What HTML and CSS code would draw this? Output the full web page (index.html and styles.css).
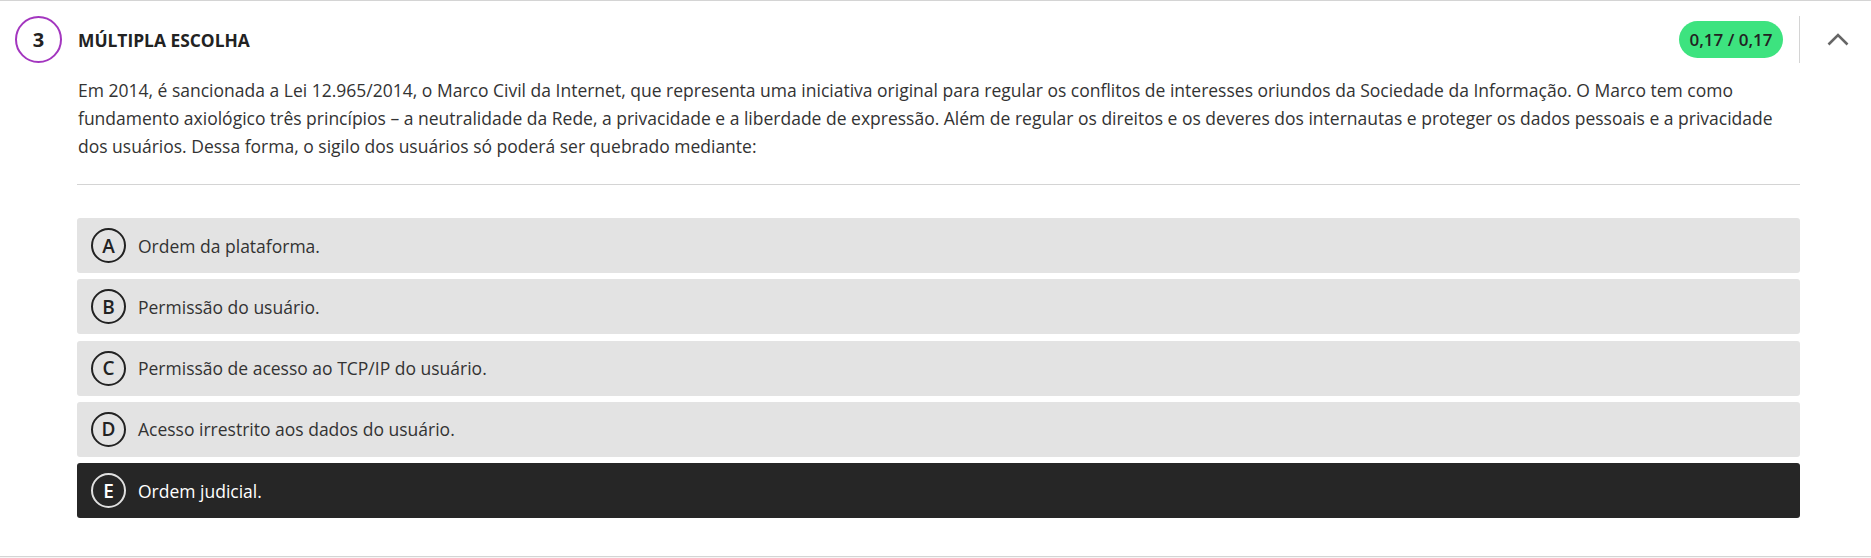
FILE: index.html
```html
<!DOCTYPE html>
<html lang="pt-BR">
<head>
  <meta charset="UTF-8">
  <title>Questão 3</title>
  <link rel="stylesheet" href="styles.css">
</head>
<body>

  <section class="questao">
    <div class="questao-topo">
      <span class="numero">3</span>
      <h2 class="tipo">MÚLTIPLA ESCOLHA</h2>
      <span class="nota">0,17 / 0,17</span>
      <span class="separador"></span>
      <button class="recolher" aria-label="Recolher">
        <svg width="22" height="13" viewBox="0 0 22 13">
          <polyline points="1.5,11.5 11,2 20.5,11.5" fill="none" stroke="#666" stroke-width="2.6"/>
        </svg>
      </button>
    </div>

    <div class="questao-corpo">
      <p class="enunciado">Em 2014, é sancionada a Lei 12.965/2014, o Marco Civil da Internet, que representa uma iniciativa original para regular os conflitos de interesses oriundos da Sociedade da Informação. O Marco tem como fundamento axiológico três princípios – a neutralidade da Rede, a privacidade e a liberdade de expressão. Além de regular os direitos e os deveres dos internautas e proteger os dados pessoais e a privacidade dos usuários. Dessa forma, o sigilo dos usuários só poderá ser quebrado mediante:</p>

      <ul class="alternativas">
        <li class="alternativa"><span class="letra">A</span>Ordem da plataforma.</li>
        <li class="alternativa"><span class="letra">B</span>Permissão do usuário.</li>
        <li class="alternativa"><span class="letra">C</span>Permissão de acesso ao TCP/IP do usuário.</li>
        <li class="alternativa"><span class="letra">D</span>Acesso irrestrito aos dados do usuário.</li>
        <li class="alternativa marcada"><span class="letra">E</span>Ordem judicial.</li>
      </ul>
    </div>
  </section>

</body>
</html>
```

FILE: styles.css
```css
* {
  margin: 0;
  padding: 0;
  box-sizing: border-box;
}

body {
  font-family: 'Open Sans', 'Noto Sans', sans-serif;
  background-color: #f6f6f6;
  color: #333;
}

.questao {
  background-color: #fff;
  border-top: 1px solid #d4d4d4;
  border-bottom: 1px solid #d4d4d4;
  padding-bottom: 38px;
}

.questao-topo {
  display: flex;
  align-items: center;
  padding: 15px 22px 0 15px;
}

.numero {
  width: 47px;
  height: 47px;
  border: 2px solid #a336bf;
  border-radius: 50%;
  display: flex;
  align-items: center;
  justify-content: center;
  font-size: 20px;
  font-weight: 700;
  color: #222;
}

.tipo {
  margin-left: 16px;
  font-size: 17.4px;
  font-weight: 700;
  color: #222;
  flex: 1;
}

.nota {
  background-color: #3de37f;
  color: #222;
  font-size: 17px;
  font-weight: 600;
  height: 37px;
  padding: 0 10.5px;
  border-radius: 19px;
  display: flex;
  align-items: center;
}

.separador {
  width: 1px;
  height: 47px;
  background-color: #d4d4d4;
  margin-left: 16px;
}

.recolher {
  background: none;
  border: none;
  margin-left: 27px;
  display: flex;
  cursor: pointer;
}

.questao-corpo {
  padding: 13px 71px 0 77px;
}

.enunciado {
  font-size: 17.5px;
  line-height: 28px;
  padding: 0 0 24px 1px;
  border-bottom: 1px solid #d4d4d4;
}

.alternativas {
  list-style: none;
  margin-top: 33px;
  display: flex;
  flex-direction: column;
  gap: 6.25px;
}

.alternativa {
  display: flex;
  align-items: center;
  height: 55px;
  padding-left: 14px;
  background-color: #e3e3e3;
  border-radius: 3px;
  font-size: 17.5px;
  color: #333;
}

.letra {
  width: 35px;
  height: 35px;
  border: 2px solid #222;
  border-radius: 50%;
  display: flex;
  align-items: center;
  justify-content: center;
  font-size: 19px;
  font-weight: 600;
  color: #222;
  margin-right: 12px;
}

.alternativa.marcada {
  background-color: #262626;
  color: #fff;
}

.alternativa.marcada .letra {
  border-color: #e0e0e0;
  color: #fff;
}
```
